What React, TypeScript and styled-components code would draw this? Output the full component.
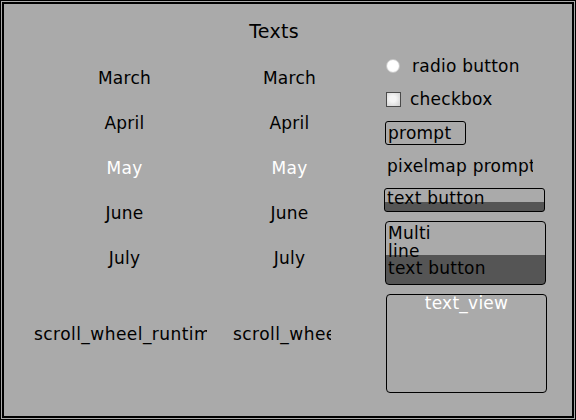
import styled, { createGlobalStyle } from 'styled-components'

const GlobalStyle = createGlobalStyle`
  html, body {
    margin: 0;
    padding: 0;
    background: #aaaaaa;
  }
  body {
    font-family: "DejaVu Sans", "Liberation Sans", sans-serif;
  }
`

const Screen = styled.div`
  width: 576px;
  height: 420px;
  box-sizing: border-box;
  border: 1px solid #000;
  padding: 1px;
  background: #aaaaaa;
  display: flex;
`

const Panel = styled.div`
  flex: 1;
  border: 2px solid #000;
  display: flex;
  flex-direction: column;
  font-size: 17px;
  letter-spacing: 0.25px;
  color: #000;
  overflow: hidden;
`

const Title = styled.div`
  height: 48px;
  box-sizing: border-box;
  padding: 6px 28px 0 0;
  display: flex;
  align-items: center;
  justify-content: center;
  font-size: 19px;
`

const Body = styled.div`
  display: flex;
`

const LeftArea = styled.div`
  width: 380px;
  display: flex;
  flex-direction: column;
`

const Wheels = styled.div`
  display: grid;
  grid-template-columns: 165px 165px;
  padding: 3px 0 0 38px;
`

const WheelColumn = styled.div`
  display: flex;
  flex-direction: column;
`

const WheelItem = styled.div<{ $selected?: boolean }>`
  height: 45px;
  display: flex;
  align-items: center;
  justify-content: center;
  color: ${p => (p.$selected ? '#fff' : '#000')};
`

const ScrollRow = styled.div`
  display: flex;
  margin-top: 32px;
  padding-left: 30px;
  gap: 26px;
`

const ScrollWheel = styled.div<{ $w: number }>`
  width: ${p => p.$w}px;
  height: 44px;
  display: flex;
  align-items: center;
  white-space: nowrap;
  overflow: hidden;
  letter-spacing: 0.45px;
`

const RightArea = styled.div`
  display: flex;
  flex-direction: column;
  align-items: flex-start;
`

const OptionRow = styled.div<{ $mt: number; $gap: number }>`
  margin-top: ${p => p.$mt}px;
  margin-left: 2px;
  height: 20px;
  display: flex;
  align-items: center;
  gap: ${p => p.$gap}px;
`

const Radio = styled.span`
  width: 14px;
  height: 14px;
  border-radius: 50%;
  box-sizing: border-box;
  border: 1px solid #c8c8c8;
  background: radial-gradient(circle at 50% 45%, #fff 55%, #eee 100%);
`

const Checkbox = styled.span`
  width: 15px;
  height: 15px;
  box-sizing: border-box;
  border: 1px solid #4a4a4a;
  background: radial-gradient(circle at 45% 45%, #f4f4f4 30%, #cfcfcf 100%);
`

const Prompt = styled.div`
  margin-top: 12px;
  margin-left: 1px;
  width: 81px;
  height: 24px;
  box-sizing: border-box;
  border: 1px solid #000;
  border-radius: 3px;
  padding-left: 2px;
  display: flex;
  align-items: center;
`

const PixelmapPrompt = styled.div`
  margin-top: 11px;
  margin-left: 3px;
  width: 146px;
  height: 20px;
  display: flex;
  align-items: center;
  white-space: nowrap;
  overflow: hidden;
`

const TextButton = styled.div`
  margin-top: 12px;
  width: 161px;
  height: 24px;
  box-sizing: border-box;
  border: 1px solid #000;
  border-radius: 3px;
  padding: 0 0 0 2px;
  line-height: 18px;
  background: linear-gradient(#aaaaaa 0 13px, #555555 13px 100%);
  overflow: hidden;
`

const MultiButton = styled.div`
  margin-top: 9px;
  margin-left: 1px;
  width: 161px;
  height: 64px;
  box-sizing: border-box;
  border: 1px solid #000;
  border-radius: 4px;
  padding: 3px 0 0 2px;
  line-height: 17.5px;
  background: linear-gradient(#aaaaaa 0 33px, #555555 33px 100%);
  overflow: hidden;
`

const TextView = styled.div`
  margin-top: 9px;
  margin-left: 2px;
  width: 161px;
  height: 99px;
  box-sizing: border-box;
  border: 1px solid #000;
  border-radius: 4px;
  color: #fff;
  text-align: center;
  line-height: 17px;
`

const months = ['March', 'April', 'May', 'June', 'July']

function App() {
  return <>
    <GlobalStyle />
    <Screen>
      <Panel>
        <Title>Texts</Title>
        <Body>
          <LeftArea>
            <Wheels>
              {[0, 1].map(c => (
                <WheelColumn key={c}>
                  {months.map(m => (
                    <WheelItem key={m} $selected={m === 'May'}>{m}</WheelItem>
                  ))}
                </WheelColumn>
              ))}
            </Wheels>
            <ScrollRow>
              <ScrollWheel $w={173}>scroll_wheel_runtime</ScrollWheel>
              <ScrollWheel $w={98}>scroll_wheel</ScrollWheel>
            </ScrollRow>
          </LeftArea>
          <RightArea>
            <OptionRow $mt={4} $gap={12}>
              <Radio />
              <span>radio button</span>
            </OptionRow>
            <OptionRow $mt={13} $gap={9}>
              <Checkbox />
              <span>checkbox</span>
            </OptionRow>
            <Prompt>prompt</Prompt>
            <PixelmapPrompt>pixelmap prompt</PixelmapPrompt>
            <TextButton>text button</TextButton>
            <MultiButton>
              Multi<br />
              line<br />
              text button
            </MultiButton>
            <TextView>text_view</TextView>
          </RightArea>
        </Body>
      </Panel>
    </Screen>
  </>
}

export default App
